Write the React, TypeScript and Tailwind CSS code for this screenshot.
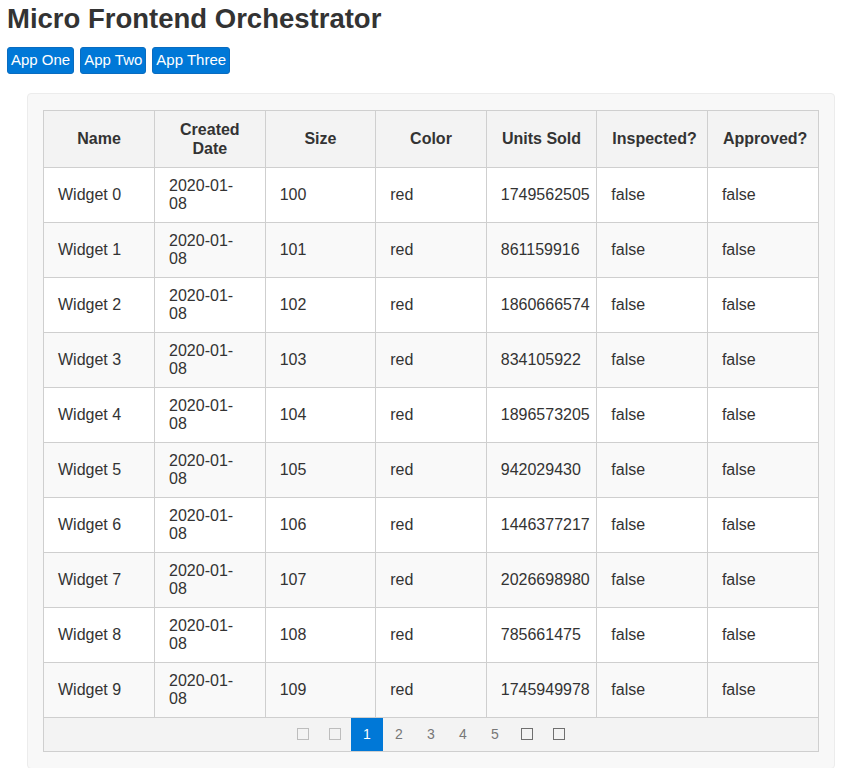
import React from "react";

type Widget = {
  name: string;
  created: string;
  size: number;
  color: string;
  unitsSold: number;
  inspected: boolean;
  approved: boolean;
};

const units = [
  1749562505, 861159916, 1860666574, 834105922, 1896573205,
  942029430, 1446377217, 2026698980, 785661475, 1745949978,
];

const widgets: Widget[] = units.map((u, i) => ({
  name: `Widget ${i}`,
  created: "2020-01-08",
  size: 100 + i,
  color: "red",
  unitsSold: u,
  inspected: false,
  approved: false,
}));

const headers = ["Name", "Created Date", "Size", "Color", "Units Sold", "Inspected?", "Approved?"];

function Box({ light }: { light?: boolean }) {
  return (
    <span
      className={
        "inline-block w-[12px] h-[12px] border " +
        (light ? "border-[#bdbdbd]" : "border-[#6f6f6f] border-[1.5px]")
      }
    />
  );
}

function Pager() {
  return (
    <div className="flex justify-center items-stretch h-[33px] bg-[#f3f3f3] text-[14px] text-[#777]">
      <button className="w-8 flex items-center justify-center"><Box light /></button>
      <button className="w-8 flex items-center justify-center"><Box light /></button>
      <button className="w-8 flex items-center justify-center bg-[#0078d7] text-white">1</button>
      {[2, 3, 4, 5].map((n) => (
        <button key={n} className="w-8 flex items-center justify-center">{n}</button>
      ))}
      <button className="w-8 flex items-center justify-center"><Box /></button>
      <button className="w-8 flex items-center justify-center"><Box /></button>
    </div>
  );
}

export default function App() {
  return (
    <div className="px-[7px] text-[#333] font-['Liberation_Sans',Arial,sans-serif]">
      <h1 className="text-[27.5px] font-bold leading-[38px]">Micro Frontend Orchestrator</h1>
      <div className="flex gap-[6px] mt-[9px]">
        {["App One", "App Two", "App Three"].map((t) => (
          <button
            key={t}
            className="h-[27px] px-[3px] bg-[#0078d7] text-white text-[15px] rounded-[3px] border border-[#0a6cc0]"
          >
            {t}
          </button>
        ))}
      </div>
      <div className="ml-5 mr-px mt-[19px] bg-[#f8f8f8] border border-[#ececec] rounded-[4px] px-[15px] pt-4 pb-4">
        <div className="border border-[#cfcfcf]">
          <table className="w-full border-collapse table-fixed text-[16px]">
            <thead>
              <tr className="h-[56px] bg-[#f3f3f3]">
                {headers.map((h, i) => (
                  <th
                    key={h}
                    className={
                      "font-bold px-[15px] leading-[19px] text-center border-b border-[#cfcfcf] " +
                      (i > 0 ? "border-l" : "")
                    }
                  >
                    {h}
                  </th>
                ))}
              </tr>
            </thead>
            <tbody>
              {widgets.map((w, r) => (
                <tr key={w.name} className={"h-[55px] " + (r % 2 ? "bg-[#f9f9f9]" : "bg-white")}>
                  {[w.name, w.created, w.size, w.color, w.unitsSold, String(w.inspected), String(w.approved)].map(
                    (v, i) => (
                      <td
                        key={i}
                        className={
                          "px-[14px] leading-[18px] border-b border-[#cfcfcf] " + (i > 0 ? "border-l" : "")
                        }
                      >
                        {v}
                      </td>
                    )
                  )}
                </tr>
              ))}
            </tbody>
          </table>
          <Pager />
        </div>
      </div>
    </div>
  );
}
